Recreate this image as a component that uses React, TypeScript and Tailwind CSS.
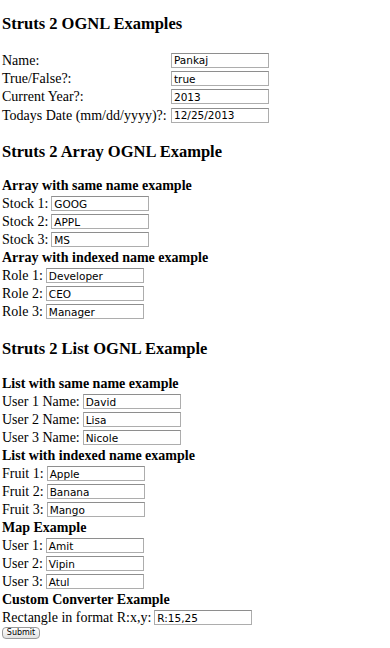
const serif = { fontFamily: '"Liberation Serif", "Times New Roman", serif' };

function Field({ value }: { value: string }) {
  return (
    <span className="inline-flex h-[15px] w-[98px] items-center border border-[#adadad] border-t-[#8e8e8e] bg-white pl-[2px] pt-px font-['DejaVu_Sans',sans-serif] text-[10.5px] leading-none text-black">
      {value}
    </span>
  );
}

function Row({ label, value }: { label: string; value: string }) {
  return (
    <div className="flex h-[18px] items-center text-[14px]">
      <span className="mr-[3px] whitespace-nowrap">{label}</span>
      <Field value={value} />
    </div>
  );
}

function Sub({ children }: { children: React.ReactNode }) {
  return <div className="flex h-[18px] items-center text-[14px] font-bold">{children}</div>;
}

function Heading({ children, top }: { children: React.ReactNode; top: string }) {
  return (
    <h3 className={`${top} flex h-[22px] items-center text-[16.5px] font-bold`}>{children}</h3>
  );
}

export default function App() {
  const basic = [
    ["Name:", "Pankaj"],
    ["True/False?:", "true"],
    ["Current Year?:", "2013"],
    ["Todays Date (mm/dd/yyyy)?:", "12/25/2013"],
  ];

  return (
    <div className="min-h-[648px] w-[390px] bg-white pl-[2px] pt-[13px] text-black" style={serif}>
      <Heading top="">Struts 2 OGNL Examples</Heading>

      <div className="mt-[16px]">
        {basic.map(([l, v]) => (
          <div key={l} className="flex h-[18.33px] items-center text-[14px]">
            <span className="w-[169px] whitespace-nowrap">{l}</span>
            <Field value={v} />
          </div>
        ))}
      </div>

      <Heading top="mt-[17px]">Struts 2 Array OGNL Example</Heading>
      <div className="mt-[13px]">
        <Sub>Array with same name example</Sub>
        <Row label="Stock 1:" value="GOOG" />
        <Row label="Stock 2:" value="APPL" />
        <Row label="Stock 3:" value="MS" />
        <Sub>Array with indexed name example</Sub>
        <Row label="Role 1:" value="Developer" />
        <Row label="Role 2:" value="CEO" />
        <Row label="Role 3:" value="Manager" />
      </div>

      <Heading top="mt-[18px]">Struts 2 List OGNL Example</Heading>
      <div className="mt-[14px]">
        <Sub>List with same name example</Sub>
        <Row label="User 1 Name:" value="David" />
        <Row label="User 2 Name:" value="Lisa" />
        <Row label="User 3 Name:" value="Nicole" />
        <Sub>List with indexed name example</Sub>
        <Row label="Fruit 1:" value="Apple" />
        <Row label="Fruit 2:" value="Banana" />
        <Row label="Fruit 3:" value="Mango" />
        <Sub>Map Example</Sub>
        <Row label="User 1:" value="Amit" />
        <Row label="User 2:" value="Vipin" />
        <Row label="User 3:" value="Atul" />
        <Sub>Custom Converter Example</Sub>
        <Row label="Rectangle in format R:x,y:" value="R:15,25" />
      </div>

      <button
        type="button"
        className="mt-[1px] flex h-[12px] w-[38px] items-center justify-center rounded-[4px] border border-[#9a9a9a] bg-gradient-to-b from-white to-[#e2e2e2] font-['DejaVu_Sans',sans-serif] text-[8px] leading-none text-black"
      >
        Submit
      </button>
    </div>
  );
}
